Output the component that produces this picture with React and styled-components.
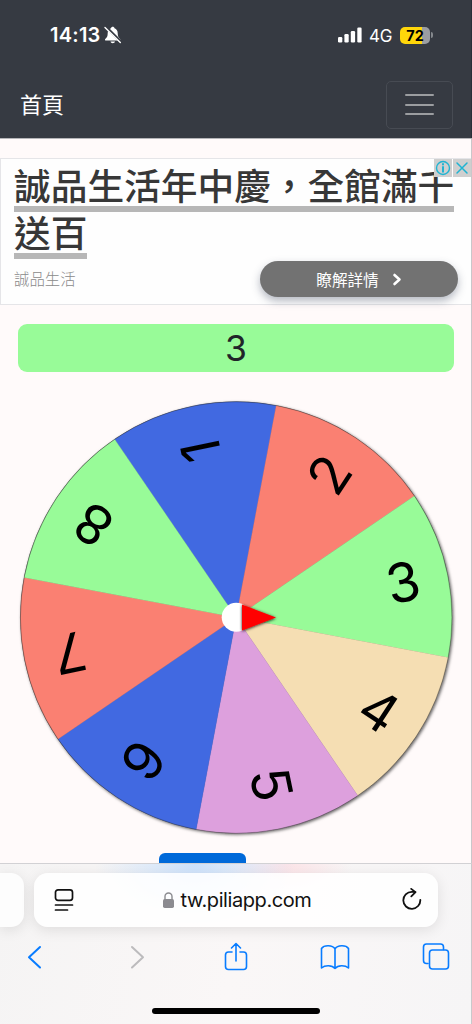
import React from "react";
import styled, { createGlobalStyle } from "styled-components";

const Global = createGlobalStyle`
  * { box-sizing: border-box; }
  body { margin: 0; background: #fffafa; font-family: Inter, "Noto Sans CJK TC", sans-serif; }
`;

const Screen = styled.div`
  width: 472px;
  height: 1024px;
  display: flex;
  flex-direction: column;
  overflow: hidden;
  background: #fffafa;
`;

const Header = styled.header`
  height: 138px;
  flex: none;
  background: #363a42;
  border-right: 1px solid #292f38;
  color: #fff;
  box-shadow: 0 1px 0 #b5b5b8;
  z-index: 1;
`;

const StatusBar = styled.div`
  display: flex;
  align-items: center;
  height: 70px;
  padding: 0 38px 0 50px;
`;

const Clock = styled.span`
  font-size: 20px;
  line-height: 24px;
  font-weight: 600;
  letter-spacing: 0.25px;
  width: 54px;
  white-space: nowrap;
`;

const StatusIcons = styled.div`
  display: flex;
  align-items: center;
  margin-left: auto;
`;

const Network = styled.span`
  font-size: 17px;
  line-height: 20px;
  margin: 1px 8px 0 7px;
  width: 23px;
  letter-spacing: -0.3px;
`;

const Battery = styled.div`
  width: 30px;
  height: 17px;
  border-radius: 5px;
  background: linear-gradient(90deg, #ffd60a 22px, #9b9da1 22px);
  color: #000;
  font-size: 14.5px;
  line-height: 17px;
  font-weight: 700;
  text-align: center;
`;

const BatteryTip = styled.i`
  width: 2px;
  height: 6px;
  margin-left: 1px;
  border-radius: 0 2px 2px 0;
  background: #85888d;
`;

const NavBar = styled.nav`
  display: flex;
  align-items: center;
  justify-content: space-between;
  height: 68px;
  padding: 0 18px 0 20px;
`;

const Brand = styled.span`
  font-size: 22px;
  line-height: 32px;
  margin-bottom: 2px;
  font-family: "Noto Sans CJK TC", sans-serif;
  color: #fff;
`;

const MenuButton = styled.button`
  display: flex;
  flex-direction: column;
  align-items: center;
  justify-content: center;
  gap: 7.6px;
  width: 67px;
  height: 48px;
  margin-top: 1px;
  padding: 0;
  background: none;
  border: 1.5px solid #474b53;
  border-radius: 5px;
`;

const MenuLine = styled.i`
  width: 29px;
  height: 2px;
  border-radius: 1px;
  background: #9b9da0;
`;

const Page = styled.main`
  height: 725px;
  flex: none;
  display: flex;
  flex-direction: column;
  overflow: hidden;
  border-right: 1px solid #c9c7ca;
`;

const Ad = styled.section`
  position: relative;
  height: 147px;
  flex: none;
  margin-top: 20px;
  padding: 6px 13px 0 13px;
  background: #fefefe;
  border: 1px solid #e5e5e8;
  border-right: 0;
`;

const AdTitle = styled.div`
  font: 500 36.7px "Noto Sans CJK TC", sans-serif;
  color: #373737;
  display: flex;
  flex-direction: column;
  align-items: flex-start;
`;

const AdLine = styled.span`
  display: block;
  height: 47px;
  line-height: 39px;
  white-space: nowrap;
  border-bottom: 6px solid #b7b7b7;
`;

const AdFooter = styled.div`
  display: flex;
  justify-content: space-between;
  padding-top: 3px;
`;

const Advertiser = styled.span`
  font: 300 15.4px/32px "Noto Sans CJK TC", sans-serif;
  color: #8a8a8a;
`;

const AdButton = styled.button`
  display: flex;
  align-items: center;
  justify-content: center;
  gap: 13px;
  width: 198px;
  height: 36px;
  margin: -1px 0 0;
  border: 0;
  border-radius: 18px;
  background: #727272;
  color: #fff;
  font: 400 15.6px/24px "Noto Sans CJK TC", sans-serif;
  box-shadow: 0 4px 9px rgba(60, 70, 95, 0.38);
`;

const AdBadges = styled.div`
  position: absolute;
  top: 0;
  right: 0;
  display: flex;
  gap: 1px;
`;

const AdBadge = styled.span`
  display: flex;
  align-items: center;
  justify-content: center;
  width: 18px;
  height: 18px;
  background: #cfcfcf;
`;

const Result = styled.div`
  height: 48px;
  flex: none;
  margin: 19px 17px 0 18px;
  border-radius: 9px;
  background: #98fb98;
  color: #212529;
  font-size: 35.5px;
  line-height: 49px;
  text-align: center;
`;

const WheelSvg = styled.svg`
  display: block;
  flex: none;
  width: 471px;
  height: 460px;
  margin-top: 16px;
`;

const Digit = styled.text`
  font-family: Inter, sans-serif;
  font-size: 54px;
  text-anchor: middle;
  fill: #000;
`;

const SpinButton = styled.button`
  width: 87px;
  height: 40px;
  flex: none;
  margin: 5px 0 0 159px;
  border: 0;
  border-radius: 6px;
  background: #0069d9;
`;

const BottomBar = styled.footer`
  flex: 1;
  border-top: 1px solid #d2d1d4;
  border-right: 1px solid #c9c9cb;
  background:
    radial-gradient(ellipse 100px 60px at 195px 0, rgba(190, 220, 255, 0.75), transparent),
    radial-gradient(ellipse 65px 35px at 287px 0, rgba(255, 218, 224, 0.65), transparent),
    linear-gradient(100deg, #f5f4f4, #faf7f7 50%, #f6f5f6);
`;

const AddressRow = styled.div`
  display: flex;
  gap: 10px;
  padding-top: 9px;
`;

const PreviousTab = styled.div`
  width: 24px;
  height: 54px;
  border-radius: 0 13px 13px 0;
  background: #fdfdfd;
  box-shadow: 0 3px 14px rgba(0, 0, 0, 0.1);
`;

const AddressBar = styled.div`
  display: flex;
  align-items: center;
  justify-content: space-between;
  width: 404px;
  height: 54px;
  padding: 0 15px 0 20px;
  border-radius: 14px;
  background: rgba(255, 255, 255, 0.87);
  box-shadow: 0 3px 14px rgba(0, 0, 0, 0.1);
`;

const Site = styled.span`
  display: flex;
  align-items: center;
  gap: 6px;
  margin-right: 2px;
  font-size: 20px;
  letter-spacing: -0.42px;
  color: #111;
`;

const Toolbar = styled.div`
  display: flex;
  justify-content: space-between;
  align-items: center;
  height: 60px;
  padding: 0 20px 0 20px;
`;

const HomeIndicator = styled.div`
  width: 168px;
  height: 6px;
  margin: 21px auto 0;
  border-radius: 3px;
  background: #000;
`;

const COLORS = ["#4169e1", "#fa8072", "#98fb98", "#f5deb3", "#dda0dd", "#4169e1", "#fa8072", "#98fb98"];
const CX = 236.2;
const CY = 229.5;
const R = 216;
const point = (deg, r) => [
  CX + r * Math.cos((deg * Math.PI) / 180),
  CY + r * Math.sin((deg * Math.PI) / 180),
];

function Wheel() {
  return (
    <WheelSvg viewBox="0 0 471 460">
      <defs>
        <filter id="rim" x="-5%" y="-5%" width="112%" height="112%">
          <feDropShadow dx="1.2" dy="1.2" stdDeviation="1.6" floodColor="#000" floodOpacity="0.6" />
        </filter>
        <filter id="needle" x="-30%" y="-30%" width="160%" height="160%">
          <feDropShadow dx="0" dy="0.7" stdDeviation="1.8" floodColor="#000" floodOpacity="0.9" />
        </filter>
        <clipPath id="beyondHub">
          <path d="M230 205h60v50h-60z" />
        </clipPath>
      </defs>
      <circle cx={CX} cy={CY} r={R} fill="#555" filter="url(#rim)" />
      {COLORS.map((color, i) => {
        const start = -124.3 + i * 45;
        const [x1, y1] = point(start, R - 0.4);
        const [x2, y2] = point(start + 45, R - 0.4);
        return (
          <path key={i} fill={color} stroke={color} strokeWidth="0.3"
            d={`M${CX} ${CY}L${x1} ${y1}A${R - 0.4} ${R - 0.4} 0 0 1 ${x2} ${y2}Z`} />
        );
      })}
      <circle cx={CX} cy={CY} r={R - 0.2} fill="none" stroke="#222" strokeOpacity="0.45" strokeWidth="0.7" />
      {COLORS.map((_, i) => {
        const angle = -101.8 + i * 45;
        const [x, y] = point(angle, 170.5);
        return (
          <Digit key={i} transform={`translate(${x} ${y}) rotate(${angle})`} y="19">{i + 1}</Digit>
        );
      })}
      <circle cx={CX} cy={CY - 0.3} r="14.5" fill="#fff" />
      <g clipPath="url(#beyondHub)">
        <path d="M242 216.5L276 229.5L242 242.5Z" fill="#f00" filter="url(#needle)" />
      </g>
    </WheelSvg>
  );
}

const Stroke = ({ w, h, color = "#087cff", width = 1.8, children }) => (
  <svg width={w} height={h} viewBox={`0 0 ${w} ${h}`} fill="none" stroke={color}
    strokeWidth={width} strokeLinecap="round" strokeLinejoin="round">{children}</svg>
);

const BellOff = () => (
  <svg width="18" height="18" viewBox="0 0 18 18">
    <path fill="#fff" d="M8.8.8C7.8.8 7.2 1.4 7 2.2 4.7 3 3.7 4.8 3.7 7.3c0 3.3-.8 4.3-2.2 5.5-.9.8-.6 1.8.6 1.8h13.2c1.2 0 1.5-1 .6-1.8-1.3-1.2-2.2-2.2-2.2-5.5 0-2.5-1-4.3-3.2-5.1C10.3 1.4 9.7.8 8.8.8zM6.5 15.5h4.5c-.3 2.2-4.2 2.2-4.5 0z" />
    <path d="M1.8.8L17 16" stroke="#363a42" strokeWidth="2.8" />
    <path d="M1 1.5L16.3 16.6" stroke="#fff" strokeWidth="1.4" strokeLinecap="round" />
  </svg>
);

export default function App() {
  return (
    <>
      <Global />
      <Screen>
        <Header>
          <StatusBar>
            <Clock>14:13</Clock>
            <BellOff />
            <StatusIcons>
              <svg width="24" height="16" viewBox="0 0 24 16" fill="#fff">
                <rect x="0" y="10" width="4.3" height="5.5" rx="1.2" />
                <rect x="6.4" y="7" width="4.3" height="8.5" rx="1.2" />
                <rect x="12.8" y="4" width="4.3" height="11.5" rx="1.2" />
                <rect x="19.3" y="0.5" width="4.3" height="15" rx="1.2" />
              </svg>
              <Network>4G</Network>
              <Battery>72</Battery>
              <BatteryTip />
            </StatusIcons>
          </StatusBar>
          <NavBar>
            <Brand>首頁</Brand>
            <MenuButton aria-label="Menu"><MenuLine /><MenuLine /><MenuLine /></MenuButton>
          </NavBar>
        </Header>
        <Page>
          <Ad>
            <AdTitle>
              <AdLine>誠品生活年中慶，全館滿千</AdLine>
              <AdLine>送百</AdLine>
            </AdTitle>
            <AdFooter>
              <Advertiser>誠品生活</Advertiser>
              <AdButton>
                瞭解詳情
                <Stroke w={10} h={13} color="#fff" width={2.6}><path d="M2.5 2L7.500 6.500L2.500 11" /></Stroke>
              </AdButton>
            </AdFooter>
            <AdBadges>
              <AdBadge>
                <Stroke w={16} h={16} color="#20b4d2" width={1.4}>
                  <circle cx="8" cy="8" r="6.5" />
                  <path d="M8 7v4.800M8 4.100v.4" strokeWidth="2" />
                </Stroke>
              </AdBadge>
              <AdBadge>
                <Stroke w={14} h={14} color="#20b4d2" width={1.5}><path d="M2 2l10 10M12 2L2 12" /></Stroke>
              </AdBadge>
            </AdBadges>
          </Ad>
          <Result>3</Result>
          <Wheel />
          <SpinButton aria-label="Spin" />
        </Page>
        <BottomBar>
          <AddressRow>
            <PreviousTab />
            <AddressBar>
              <Stroke w={20} h={24} color="#111" width={1.7}>
                <rect x="1.500" y="1.800" width="17" height="10.500" rx="2.500" />
                <path d="M1.500 17h17M1.500 22h12" />
              </Stroke>
              <Site>
                <svg width="13" height="17" viewBox="0 0 13 17">
                  <path d="M3 8V4.500a3.500 3.500 0 0 1 7 0V8" fill="none" stroke="#8b8b90" strokeWidth="1.400" />
                  <rect x="1" y="7" width="11" height="9" rx="1.700" fill="#8b8b90" />
                </svg>
                tw.piliapp.com
              </Site>
              <Stroke w={22} h={24} color="#111" width={1.8}>
                <path d="M19.300 11.800a8.500 8.500 0 1 1-8.500-8h3.600M10.200 0.900L14.500 4.100L10.300 8.300" />
              </Stroke>
            </AddressBar>
          </AddressRow>
          <Toolbar>
            <Stroke w={30} h={28} width={2}><path d="M20 4L9 14.200L20 24.500" /></Stroke>
            <Stroke w={30} h={28} color="#bcbbbd" width={2}><path d="M11 4L22 14.200L11 24.500" /></Stroke>
            <Stroke w={28} h={32} width={1.6}>
              <path d="M10 11H6.500a3 3 0 0 0-3 3v11.500a3 3 0 0 0 3 3h15a3 3 0 0 0 3-3V14a3 3 0 0 0-3-3H18M14 20V2.500M9.500 7L14 2.500L18.500 7" />
            </Stroke>
            <Stroke w={30} h={28} width={1.6}>
              <path d="M15 25.500V6C12.500 1.800 4 1.800 1.500 5.500V25C5 22 12 22 15 25.500C18 22 25 22 28.500 25V5.500C26 1.800 17.500 1.800 15 6" />
            </Stroke>
            <Stroke w={30} h={30} width={1.6}>
              <path d="M7 21.500H5.500a3 3 0 0 1-3-3V5a3 3 0 0 1 3-3h14a3 3 0 0 1 3 3v2.500" />
              <rect x="8.500" y="8" width="19" height="19" rx="3" />
            </Stroke>
          </Toolbar>
          <HomeIndicator />
        </BottomBar>
      </Screen>
    </>
  );
}
